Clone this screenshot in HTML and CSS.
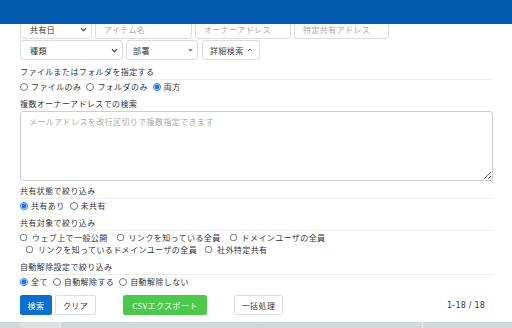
FILE: index.html
```html
<!DOCTYPE html>
<html lang="ja">
<head>
<meta charset="utf-8">
<link rel="stylesheet" href="styles.css">
</head>
<body>
<header class="topbar"></header>
<main class="page">
  <div class="row row-first">
    <div class="fsel w72"><span>共有日</span><svg class="chev" viewBox="0 0 8 6" width="7" height="5"><path d="M1 1.5 L4 4.5 L7 1.5" fill="none" stroke="#444" stroke-width="1.3"/></svg></div>
    <input class="field w97" placeholder="アイテム名">
    <input class="field w96" placeholder="オーナーアドレス">
    <input class="field w95" placeholder="特定共有アドレス">
  </div>
  <div class="row row-second">
    <div class="fsel w103"><span>種類</span><svg class="chev" viewBox="0 0 8 6" width="7" height="5"><path d="M1 1.5 L4 4.5 L7 1.5" fill="none" stroke="#444" stroke-width="1.3"/></svg></div>
    <div class="fsel w72 dept"><span>部署</span><svg class="tri" viewBox="0 0 6 4" width="5" height="3"><path d="M0 0 H6 L3 4 Z" fill="#888"/></svg></div>
    <button class="btn-detail">詳細検索<svg viewBox="0 0 8 6" width="6" height="4"><path d="M1 4.5 L4 1.5 L7 4.5" fill="none" stroke="#555" stroke-width="1.2"/></svg></button>
  </div>

  <section class="sec s1">
    <div class="sec-label">ファイルまたはフォルダを指定する</div>
    <div class="opts">
      <label class="opt"><input type="radio" name="ff">ファイルのみ</label>
      <label class="opt"><input type="radio" name="ff">フォルダのみ</label>
      <label class="opt"><input type="radio" name="ff" checked>両方</label>
    </div>
  </section>

  <section class="sec s2">
    <div class="sec-label plain">複数オーナーアドレスでの検索</div>
    <textarea class="multi" placeholder="メールアドレスを改行区切りで複数指定できます"></textarea>
  </section>

  <section class="sec s3">
    <div class="sec-label">共有状態で絞り込み</div>
    <div class="opts">
      <label class="opt"><input type="radio" name="st" checked>共有あり</label>
      <label class="opt"><input type="radio" name="st">未共有</label>
    </div>
  </section>

  <section class="sec s4">
    <div class="sec-label">共有対象で絞り込み</div>
    <div class="opts">
      <label class="opt"><input type="checkbox">ウェブ上で一般公開</label>
      <label class="opt"><input type="checkbox">リンクを知っている全員</label>
      <label class="opt"><input type="checkbox">ドメインユーザの全員</label>
    </div>
    <div class="opts indent">
      <label class="opt"><input type="checkbox">リンクを知っているドメインユーザの全員</label>
      <label class="opt"><input type="checkbox">社外特定共有</label>
    </div>
  </section>

  <section class="sec s5">
    <div class="sec-label">自動解除設定で絞り込み</div>
    <div class="opts">
      <label class="opt"><input type="radio" name="au" checked>全て</label>
      <label class="opt"><input type="radio" name="au">自動解除する</label>
      <label class="opt"><input type="radio" name="au">自動解除しない</label>
    </div>
  </section>

  <div class="actions">
    <button class="btn btn-search">検索</button>
    <button class="btn btn-clear">クリア</button>
    <button class="btn btn-csv">CSVエクスポート</button>
    <button class="btn btn-bulk">一括処理</button>
    <span class="count">1-18 / 18</span>
  </div>
</main>
<div class="table-strip">
  <div class="strip-inner">
    <div class="cell c1"></div>
    <div class="cell c2"></div>
    <div class="cell c3"></div>
  </div>
</div>
</body>
</html>
```

FILE: styles.css
```css
* { box-sizing: border-box; }
html, body { margin: 0; padding: 0; }
body {
  width: 512px;
  height: 328px;
  overflow: hidden;
  background: #fff;
  font-family: "Noto Sans CJK JP", "Noto Sans", sans-serif;
  font-size: 8px;
  color: #333;
  letter-spacing: 0.4px;
}
.topbar {
  position: relative;
  z-index: 2;
  height: 24px;
  background: #015aab;
}
.page {
  padding: 0 19px 0 20px;
}
.row { display: flex; gap: 3px; }
.row-first { margin-top: -4px; height: 19px; }
.row-second { margin-top: 1px; height: 20px; }

.fsel, .field, .btn-detail {
  height: 100%;
  border: 1px solid #dcdcdc;
  border-radius: 3px;
  background: #fff;
  font-family: inherit;
  font-size: 8px;
  letter-spacing: 0.4px;
}
.fsel {
  display: flex;
  align-items: center;
  justify-content: space-between;
  padding: 0 4px 0 9px;
  color: #333;
}
.fsel.dept { padding-left: 6px; }
.field {
  padding: 0 8px;
  color: #333;
  outline: none;
}
.field::placeholder { color: #a8a8a8; }
.w72 { width: 72px; }
.w95 { width: 95px; }
.w96 { width: 96px; }
.w97 { width: 97px; }
.w103 { width: 103px; }
.row-second .dept { margin-right: 1px; }
.btn-detail {
  width: 58px;
  display: flex;
  align-items: center;
  gap: 3px;
  padding: 0 0 0 7px;
  color: #444;
}

.sec-label {
  line-height: 14px;
  border-bottom: 1px solid #ececec;
  height: 15px;
}
.sec-label.plain { border-bottom: 0; height: 14px; }
.s1 { margin-top: 5px; }
.s2 { margin-top: 4px; }
.s3 { margin-top: 3px; }
.s4 { margin-top: 4px; }
.s5 { margin-top: 5px; }

.opts {
  display: flex;
  align-items: center;
  height: 13px;
  gap: 5px;
}
.s4 .opts { height: 12px; gap: 9px; }
.s4 .opts.indent { padding-left: 6px; gap: 8px; }
.opt {
  display: flex;
  align-items: center;
  gap: 3px;
  white-space: nowrap;
}
.opt input {
  margin: 0;
  width: 8px;
  height: 8px;
  accent-color: #1a73e8;
}
.opt input[type="checkbox"] { width: 7px; height: 7px; }
.s4 .opt { gap: 5px; }

.multi {
  display: block;
  width: 100%;
  height: 70px;
  margin: 0;
  border: 1px solid #cfcfcf;
  border-radius: 3px;
  padding: 4px 8px;
  font-family: inherit;
  font-size: 8px;
  letter-spacing: 0.4px;
  color: #333;
  resize: both;
  outline: none;
}
.multi::placeholder { color: #a8a8a8; }

.actions {
  display: flex;
  align-items: center;
  margin-top: 7px;
  height: 20px;
}
.btn {
  height: 20px;
  border-radius: 2px;
  font-family: inherit;
  font-size: 8px;
  letter-spacing: 0.4px;
  padding: 0;
  border: 1px solid #dedede;
  background: #fff;
  color: #333;
}
.btn-search {
  width: 32px;
  background: #0b6fcf;
  border-color: #0b6fcf;
  color: #fff;
}
.btn-clear { width: 41px; margin-left: 3px; }
.btn-csv {
  width: 84px;
  margin-left: 27px;
  background: #4bc94b;
  border-color: #4bc94b;
  color: #fff;
}
.btn-bulk { width: 49px; margin-left: 27px; }
.count {
  margin-left: auto;
  padding-right: 8px;
  font-family: "DejaVu Sans", sans-serif;
  font-size: 8px;
  letter-spacing: 0.2px;
  color: #2d3a40;
}

.table-strip {
  margin-top: 7px;
  height: 10px;
  background: #d3d8d9;
  padding: 0 0 0 20px;
}
.strip-inner {
  display: flex;
  height: 100%;
}
.cell { height: 100%; }
.c1 { width: 41px; background: #dde1e1; border-right: 1px solid #eef0f0; }
.c2 { width: 362px; border-right: 1px solid #f2f4f4; background: #d1d6d7; }
.c3 { width: 70px; background: #d1d6d7; }
```
